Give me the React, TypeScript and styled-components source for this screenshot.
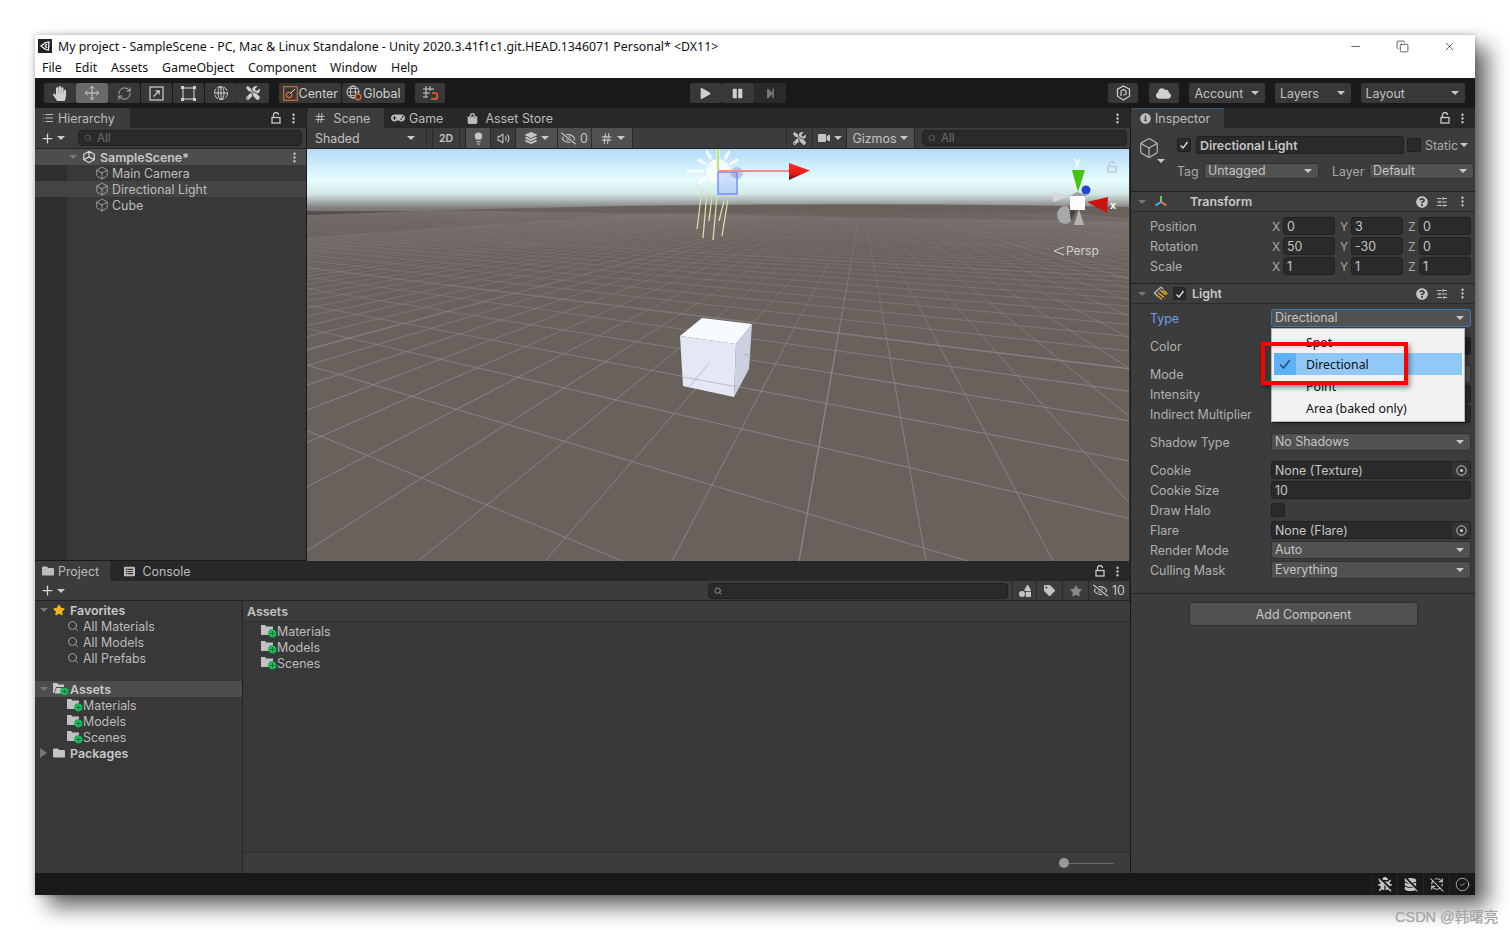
import React from 'react'
import styled, { createGlobalStyle } from 'styled-components'
import { Box, EllipsisVertical, Globe, Hash, Lightbulb, List, Minus, Move, Plus, RefreshCw, Search, SlidersHorizontal, Copy, X, Volume2, CircleCheck } from 'lucide-react'
import {
    FaBug, FaCloud, FaDatabase, FaFolder, FaFolderOpen, FaGamepad, FaHandPaper, FaInfoCircle, FaLayerGroup, FaListAlt,
    FaPause, FaPlay, FaQuestionCircle, FaRegEyeSlash, FaShapes, FaShoppingBag, FaStar, FaStepForward, FaTag, FaTools, FaVideo,
} from 'react-icons/fa'

const GlobalStyle = createGlobalStyle`
    html, body {
        margin: 0;
        height: 100%;
        overflow: hidden;
        background: #fff;
    }
    * { box-sizing: border-box; }
`

const Page = styled.div`
    position: relative;
    width: 1510px;
    height: 930px;
    padding: 35px 0 0 35px;
    font-family: Inter, "Liberation Sans", sans-serif;
    font-size: 12.4px;
    color: #c0c0c0;
`

const Window = styled.div`
    display: flex;
    flex-direction: column;
    width: 1440px;
    height: 860px;
    background: #191919;
    box-shadow: 13px 12px 20px rgba(0, 0, 0, 0.6), 0 0 6px rgba(0, 0, 0, 0.25);
`

const Watermark = styled.div`
    position: absolute;
    left: 1395px;
    top: 905px;
    font-family: "Liberation Sans", "Noto Sans CJK SC", sans-serif;
    font-size: 14.5px;
    color: #a2a2a2;
    text-shadow: 0 0 1px #ccc;
`

const TitleBar = styled.div`
    display: flex;
    align-items: center;
    height: 22px;
    padding-left: 3px;
    background: #fff;
    color: #111;
    font-family: "Noto Sans", "Liberation Sans", sans-serif;
    font-size: 12.35px;
`

const TitleText = styled.span`
    margin-left: 6px;
    flex: 1;
    white-space: nowrap;
`

const WinButtons = styled.div`
    display: flex;
    align-items: center;
    margin-right: 2px;
    svg { width: 47px; height: 13px; stroke-width: 1.2; color: #111; }
`

const MenuBar = styled.div`
    display: flex;
    align-items: center;
    height: 21px;
    background: #fff;
    color: #111;
    font-family: "Noto Sans", "Liberation Sans", sans-serif;
    font-size: 12.35px;
`

const MenuItem = styled.span<{ $w: number }>`
    width: ${props => props.$w}px;
    padding-left: 7px;
`

const MainToolbar = styled.div`
    display: flex;
    align-items: center;
    height: 30px;
    padding-left: 9px;
    background: #191919;
`

const ToolGroup = styled.div<{ $mr?: number }>`
    display: flex;
    gap: 0;
    margin-right: ${props => props.$mr ?? 10}px;
`

const ToolButton = styled.div<{ $w?: number; $active?: boolean; $dim?: boolean }>`
    display: flex;
    align-items: center;
    justify-content: center;
    gap: 1px;
    width: ${props => props.$w ?? 31.7}px;
    height: 20px;
    margin-right: 0.5px;
    border-radius: 2px;
    background: ${props => props.$active ? '#6a6a6a' : props.$dim ? '#2a2a2a' : '#383838'};
    color: ${props => props.$dim ? '#777' : '#d0d0d0'};
    font-size: 12.4px;
    white-space: nowrap;
    svg { flex: none; }
`

const BarDropdown = styled.div<{ $w: number }>`
    display: flex;
    align-items: center;
    justify-content: space-between;
    width: ${props => props.$w}px;
    height: 20px;
    margin-right: 10px;
    padding: 0 6px 0 5px;
    border-radius: 2px;
    background: #383838;
    color: #c0c0c0;
`

const Caret = styled.span<{ $color?: string; $dir?: 'down' | 'right' }>`
    flex: none;
    display: inline-block;
    width: 0;
    height: 0;
    ${props => props.$dir === 'right' ? `
        border-top: 5px solid transparent;
        border-bottom: 5px solid transparent;
        border-left: 7px solid ${props.$color ?? '#c8c8c8'};
    ` : `
        border-left: 4px solid transparent;
        border-right: 4px solid transparent;
        border-top: 4.5px solid ${props.$color ?? '#c8c8c8'};
    `}
`

const Spacer = styled.div<{ $w?: number }>`
    flex: ${props => props.$w ? 'none' : 1};
    width: ${props => props.$w ? `${props.$w}px` : 'auto'};
`

const Body = styled.div`
    display: flex;
    height: 765px;
    background: #191919;
`

const LeftColumn = styled.div`
    display: flex;
    flex-direction: column;
    width: 1095px;
`

const TopRow = styled.div`
    display: flex;
    height: 452px;
    gap: 1px;
`

const Panel = styled.div<{ $w?: number }>`
    display: flex;
    flex-direction: column;
    width: ${props => props.$w ? `${props.$w}px` : 'auto'};
    flex: ${props => props.$w ? 'none' : 1};
    background: #383838;
    min-height: 0;
`

const TabStrip = styled.div`
    display: flex;
    align-items: stretch;
    height: 20px;
    background: #282828;
    flex: none;
`

const Tab = styled.div<{ $w: number; $active?: boolean; $accent?: boolean }>`
    display: flex;
    align-items: center;
    gap: 4px;
    width: ${props => props.$w}px;
    padding-left: 7px;
    background: ${props => props.$active ? '#3c3c3c' : 'transparent'};
    border-top: ${props => props.$accent ? '1px solid #2c5d87' : 'none'};
    color: #bcbcbc;
    border-radius: 2px 2px 0 0;
    white-space: nowrap;
    svg { flex: none; }
`

const TabActions = styled.div`
    display: flex;
    align-items: center;
    gap: 6px;
    margin-left: auto;
    padding-right: 6px;
    color: #c8c8c8;
`

const PanelToolbar = styled.div<{ $h?: number }>`
    display: flex;
    align-items: center;
    height: ${props => props.$h ?? 21}px;
    flex: none;
    background: #3c3c3c;
    border-bottom: 1px solid #232323;
`

const AddMenu = styled.div`
    display: flex;
    align-items: center;
    gap: 2px;
    width: 43px;
    padding-left: 5px;
    color: #d8d8d8;
`

const SearchBox = styled.div<{ $w?: number }>`
    display: flex;
    align-items: center;
    gap: 5px;
    flex: ${props => props.$w ? 'none' : 1};
    width: ${props => props.$w ? `${props.$w}px` : 'auto'};
    height: 16px;
    padding-left: 5px;
    margin-right: 4px;
    background: #2a2a2a;
    border: 1px solid #212121;
    border-radius: 4px;
    color: #6f6f6f;
    font-size: 11.5px;
`

const TreeArea = styled.div<{ $gutter?: boolean }>`
    flex: 1;
    padding-top: 0;
    background: ${props => props.$gutter ? 'linear-gradient(to right, #2f2f2f 32px, #383838 32px)' : '#383838'};
`

const TreeRow = styled.div<{ $indent: number; $bg?: string; $bold?: boolean; $mt?: number }>`
    display: flex;
    align-items: center;
    height: 16px;
    margin-top: ${props => props.$mt ?? 0}px;
    padding-left: ${props => props.$indent}px;
    background: ${props => props.$bg ?? 'transparent'};
    font-weight: ${props => props.$bold ? 600 : 400};
    color: ${props => props.$bold ? '#c8c8c8' : '#bdbdbd'};
    white-space: nowrap;
    svg { flex: none; }
`

const RowIcon = styled.span<{ $w?: number; $color?: string }>`
    display: inline-flex;
    align-items: center;
    width: ${props => props.$w ?? 17}px;
    flex: none;
    color: ${props => props.$color ?? '#c4c4c4'};
`

const RowEnd = styled.span`
    margin-left: auto;
    display: inline-flex;
    padding-right: 5px;
    color: #c8c8c8;
`

const Cell = styled.div<{ $w: number; $on?: boolean; $bl?: boolean }>`
    display: flex;
    align-items: center;
    justify-content: center;
    gap: 4px;
    width: ${props => props.$w}px;
    height: 100%;
    flex: none;
    border-right: 1px solid #2a2a2a;
    border-left: ${props => props.$bl ? '1px solid #2a2a2a' : 'none'};
    background: ${props => props.$on ? '#505050' : 'transparent'};
    color: #c4c4c4;
    font-size: 12.4px;
`

const SceneCanvas = styled.div`
    position: relative;
    flex: 1;
    min-height: 0;
    svg { display: block; }
`

const PerspLabel = styled.div`
    position: absolute;
    left: 746px;
    top: 94px;
    display: flex;
    align-items: center;
    gap: 2px;
    color: #d0d0d0;
    font-size: 12px;
`

const ProjectPanel = styled(Panel)`
    margin-top: 1px;
    flex: 1;
`

const ProjectBody = styled.div`
    flex: 1;
    display: flex;
    min-height: 0;
`

const ProjectTree = styled.div`
    width: 208px;
    flex: none;
    padding-top: 1px;
    border-right: 1px solid #232323;
`

const ProjectFiles = styled.div`
    flex: 1;
    display: flex;
    flex-direction: column;
`

const FilesHeader = styled.div`
    display: flex;
    align-items: center;
    height: 21px;
    padding-left: 4px;
    background: #3c3c3c;
    border-bottom: 1px solid #303030;
    font-weight: 600;
    color: #c4c4c4;
`

const FilesList = styled.div`
    flex: 1;
    padding-top: 1px;
`

const FilesFooter = styled.div`
    display: flex;
    align-items: center;
    justify-content: flex-end;
    height: 21px;
    padding-right: 16px;
    background: #3c3c3c;
    border-top: 1px solid #2c2c2c;
`

const Slider = styled.div`
    position: relative;
    width: 55px;
    height: 1px;
    background: #6a6a6a;
    &::before {
        content: '';
        position: absolute;
        left: 0;
        top: -5px;
        width: 10px;
        height: 10px;
        border-radius: 50%;
        background: #999;
    }
`

const Inspector = styled(Panel)`
    width: 344px;
    margin-left: 1px;
    flex: none;
    background: #3c3c3c;
`

const ObjectHeader = styled.div`
    display: flex;
    height: 64px;
    flex: none;
    padding: 8px 5px 0 7px;
    border-bottom: 1px solid #232323;
`

const CubeSlot = styled.div`
    position: relative;
    width: 39px;
    flex: none;
    padding-top: 1px;
    color: #bdbdbd;
`

const CubeCaret = styled(Caret)`
    position: absolute;
    left: 19px;
    top: 23px;
`

const HeaderRows = styled.div`
    flex: 1;
    display: flex;
    flex-direction: column;
    gap: 8px;
`

const HeaderRow = styled.div`
    display: flex;
    align-items: center;
    height: 18px;
`

const Check = styled.span<{ $size?: number; $ml?: number }>`
    display: inline-flex;
    align-items: center;
    justify-content: center;
    width: ${props => props.$size ?? 14}px;
    height: ${props => props.$size ?? 14}px;
    margin-left: ${props => props.$ml ?? 0}px;
    flex: none;
    background: #2a2a2a;
    border: 1px solid #212121;
    border-radius: 2px;
    color: #ddd;
`

const TextField = styled.div<{ $w?: number; $strong?: boolean; $ml?: number }>`
    display: flex;
    align-items: center;
    justify-content: space-between;
    width: ${props => props.$w ? `${props.$w}px` : '100%'};
    height: 18px;
    margin-left: ${props => props.$ml ?? 0}px;
    flex: none;
    padding-left: 3px;
    background: #2a2a2a;
    border: 1px solid #212121;
    border-radius: 3px;
    color: #c4c4c4;
    font-weight: ${props => props.$strong ? 600 : 400};
    overflow: hidden;
    white-space: nowrap;
`

const Select = styled.div<{ $w?: number; $ml?: number; $focus?: boolean }>`
    display: flex;
    align-items: center;
    justify-content: space-between;
    width: ${props => props.$w ? `${props.$w}px` : '100%'};
    height: 18px;
    margin-left: ${props => props.$ml ?? 0}px;
    flex: none;
    padding: 0 6px 1px 3px;
    background: #515151;
    border: 1px solid ${props => props.$focus ? '#3a79bb' : '#303030'};
    border-radius: 3px;
    color: #c4c4c4;
    white-space: nowrap;
`

const Muted = styled.span<{ $ml?: number; $w?: number }>`
    margin-left: ${props => props.$ml ?? 0}px;
    width: ${props => props.$w ? `${props.$w}px` : 'auto'};
    color: #a8a8a8;
    flex: none;
`

const ComponentHeader = styled.div`
    display: flex;
    align-items: center;
    height: 20px;
    flex: none;
    padding-left: 7px;
    background: #3e3e3e;
    border-bottom: 1px solid #2c2c2c;
    font-weight: 600;
    color: #c8c8c8;
`

const HeaderActions = styled.div`
    display: flex;
    align-items: center;
    gap: 8px;
    margin-left: auto;
    padding-right: 6px;
    color: #c4c4c4;
`

const ComponentBody = styled.div<{ $h: number }>`
    height: ${props => props.$h}px;
    flex: none;
    padding-top: 4px;
    border-bottom: 1px solid #232323;
`

const PropRow = styled.div<{ $mt?: number }>`
    display: grid;
    grid-template-columns: 121px 200px;
    align-items: center;
    height: 20px;
    margin-top: ${props => props.$mt ?? 0}px;
    padding-left: 19px;
`

const PropLabel = styled.span<{ $focus?: boolean }>`
    color: ${props => props.$focus ? '#6d9ee6' : '#b0b0b0'};
    white-space: nowrap;
`

const ValueCell = styled.div`
    position: relative;
    display: flex;
    align-items: center;
`

const VectorCell = styled.div`
    display: flex;
    gap: 4px;
`

const Axis = styled.div`
    display: flex;
    align-items: center;
    color: #a8a8a8;
    span { width: 12px; flex: none; padding-left: 1px; font-size: 12px; }
`

const PickerSlot = styled.span`
    display: flex;
    align-items: center;
    justify-content: center;
    width: 18px;
    height: 16px;
    background: #343434;
    color: #c8c8c8;
`

const ColorStub = styled.div`
    width: 100%;
    height: 18px;
    background: #222;
    border-radius: 3px;
`

const PopupMenu = styled.div`
    position: absolute;
    left: 0;
    top: 19px;
    width: 194px;
    height: 94px;
    z-index: 5;
    padding-top: 2px;
    background: #f2f2f2;
    border: 1px solid #b8b8b8;
    box-shadow: 2px 2px 4px rgba(0, 0, 0, 0.35);
    font-family: "Noto Sans", "Liberation Sans", sans-serif;
    font-size: 12.35px;
    color: #111;
`

const PopupItem = styled.div<{ $selected?: boolean }>`
    display: flex;
    align-items: center;
    height: 22px;
    margin: 0 2px;
    background: ${props => props.$selected ? '#90c8f8' : 'transparent'};
`

const PopupCheck = styled.span<{ $selected?: boolean }>`
    display: flex;
    align-items: center;
    justify-content: center;
    width: 22px;
    height: 100%;
    margin-right: 10px;
    background: ${props => props.$selected ? '#5eb1f8' : 'transparent'};
    color: #2c4a6a;
`

const RedMark = styled.div`
    position: absolute;
    left: -11px;
    top: 13px;
    width: 147px;
    height: 43px;
    border: 4px solid #f00;
    box-shadow: 2px 3px 5px rgba(0, 0, 0, 0.4), inset 1px 1px 3px rgba(0, 0, 0, 0.15);
    z-index: 6;
`

const AddRow = styled.div`
    display: flex;
    justify-content: center;
    padding: 8px 0 0 1px;
`

const AddButton = styled.div`
    display: flex;
    align-items: center;
    justify-content: center;
    width: 229px;
    height: 24px;
    background: #515151;
    border: 1px solid #303030;
    border-radius: 3px;
    color: #c8c8c8;
`

const StatusBar = styled.div`
    display: flex;
    align-items: center;
    justify-content: flex-end;
    height: 22px;
    flex: none;
    background: #191919;
`

const StatusIcon = styled.span`
    position: relative;
    display: flex;
    align-items: center;
    justify-content: center;
    width: 26px;
    height: 100%;
    border-left: 1px solid #262626;
    color: #c4c4c4;
`

const Slash = styled.span`
    position: absolute;
    left: 5px;
    top: 10px;
    width: 18px;
    height: 2px;
    background: #191919;
    transform: rotate(45deg);
    &::after {
        content: '';
        position: absolute;
        left: 0;
        top: 2px;
        width: 18px;
        height: 1px;
        background: #c4c4c4;
    }
`

/* icons */

const LockIcon = ({ color = '#c8c8c8' }: { color?: string }) => (
    <svg width="10" height="12" viewBox="0 0 10 12" fill="none" stroke={color} strokeWidth="1.3">
        <rect x="1" y="5.5" width="8" height="5.5" />
        <path d="M2.5 5.5V3a2.5 2.5 0 0 1 5 0" />
    </svg>
)

const Dots = () => <EllipsisVertical size={13} strokeWidth={2.4} />

const UnityMark = ({ size = 14, color = '#fff' }: { size?: number; color?: string }) => (
    <svg width={size} height={size} viewBox="0 0 16 16" fill="none" stroke={color} strokeWidth="1.3">
        <path d="M8 1.5 14 5v6l-6 3.5L2 11V5z M8 8V1.5 M8 8l-6 3 M8 8l6 3" />
    </svg>
)

const FolderPlus = ({ open }: { open?: boolean }) => (
    <svg width="16" height="14" viewBox="0 0 16 14">
        {open ? (
            <path d="M0 1h4l1.5 1.5H11V5H3L1 11H0z M3.5 6H13l-2 5.5H1.5z" fill="#c8c8c8" />
        ) : (
            <path d="M0 1h4l1.5 1.5H12v8.5H0z" fill="#c0c0c0" />
        )}
        <circle cx="11.5" cy="9.5" r="4" fill="#0ecb5a" stroke="#383838" strokeWidth="0.4" />
        <path d="M11.5 7.3v4.4M9.3 9.5h4.4" stroke="#063" strokeWidth="1.1" />
    </svg>
)

const ScaleIcon = () => (
    <svg width="15" height="15" viewBox="0 0 15 15" fill="none" stroke="#d0d0d0" strokeWidth="1.2">
        <rect x="1" y="1" width="13" height="13" />
        <path d="M4.5 10.5 10 5M6.5 4.8h3.7v3.7" />
    </svg>
)

const RectIcon = () => (
    <svg width="15" height="15" viewBox="0 0 15 15" fill="none" stroke="#d0d0d0" strokeWidth="1.1">
        <rect x="2" y="2" width="11" height="11" />
        <path d="M0 0h3v3H0zM12 0h3v3h-3zM0 12h3v3H0zM12 12h3v3h-3z" fill="#d0d0d0" stroke="none" />
    </svg>
)

const TransformIcon = () => (
    <svg width="16" height="16" viewBox="0 0 16 16" fill="none" stroke="#cfcfcf" strokeWidth="1">
        <circle cx="8" cy="8" r="6.5" strokeDasharray="5 1.5" />
        <ellipse cx="8" cy="8" rx="3" ry="6.5" />
        <path d="M1 8h14M8 1v14" />
    </svg>
)

const CenterIcon = () => (
    <svg width="15" height="15" viewBox="0 0 15 15" fill="none">
        <rect x="0.7" y="0.7" width="13.6" height="13.6" stroke="#e0703a" strokeWidth="1.1" />
        <circle cx="6" cy="9" r="2.7" stroke="#e0703a" strokeWidth="1.2" />
        <path d="M8 7l4-4" stroke="#ddd" strokeWidth="1" />
    </svg>
)

const GlobalIcon = () => (
    <svg width="16" height="16" viewBox="0 0 16 16" fill="none">
        <circle cx="7" cy="7" r="6" stroke="#d0d0d0" />
        <ellipse cx="7" cy="7" rx="2.6" ry="6" stroke="#d0d0d0" />
        <path d="M1 7h12M2 3.5h10M2 10.5h10" stroke="#d0d0d0" strokeWidth="0.8" />
        <circle cx="12" cy="12" r="2.8" stroke="#e66a2a" strokeWidth="1.3" fill="#383838" />
    </svg>
)

const SnapIcon = () => (
    <svg width="16" height="16" viewBox="0 0 16 16" fill="none">
        <path d="M4 1v11M8 1v5M1 4h11M1 8h7M1 12h5" stroke="#d0d0d0" />
        <path d="M10 8h2.5a2.7 2.7 0 0 1 0 6H9" stroke="#f0602a" strokeWidth="1.7" />
    </svg>
)

const CollabIcon = () => (
    <svg width="15" height="16" viewBox="0 0 15 16" fill="none" stroke="#cfcfcf" strokeWidth="1.2">
        <path d="M7.5 1 13.5 4.2v7L7.5 15l-6-3.8v-7z" />
        <path d="M5 11V6l2.5-1.5L10 6v3L7.5 10.300" />
    </svg>
)

const AxisGizmoIcon = () => (
    <svg width="16" height="14" viewBox="0 0 16 14" fill="none" strokeWidth="2">
        <path d="M8 1v6" stroke="#5fd05a" />
        <path d="M8 7 2.500 10.500" stroke="#4ab6ea" />
        <path d="M8 7l5.500 3.500" stroke="#e9784b" />
    </svg>
)

const LightIcon = () => (
    <svg width="16" height="15" viewBox="0 0 16 15" fill="none" stroke="#e6a92a" strokeWidth="1.4">
        <path d="M8 1 1.500 7l3 3M8 1l2 2" stroke="#b9b9b9" />
        <path d="M7 4l6 5M5 6.500l6 5M3.500 9l5.500 4.500M10 4l4.500 4" />
    </svg>
)

const PickerIcon = () => (
    <svg width="11" height="11" viewBox="0 0 11 11" fill="none" stroke="#c8c8c8">
        <circle cx="5.500" cy="5.500" r="4.700" />
        <circle cx="5.500" cy="5.500" r="1.500" fill="#c8c8c8" stroke="none" />
    </svg>
)

const EyeCount = ({ n }: { n: number }) => (
    <>
        <FaRegEyeSlash size={15} />
        <span>{n}</span>
    </>
)

/* scene view */

const VP_A = { x: -560, y: 50 }
const VP_B = { x: 555, y: 50 }
const SCENE_W = 822
const SCENE_H = 412

const rowLines = Array.from({ length: 62 }, (_, i) => {
    const n = i - 2
    const y = 50 + 1 / (0.00313 + 0.00069 * n)
    const slope = (y - VP_A.y) / (SCENE_W - VP_A.x)
    return { y1: VP_A.y + slope * (0 - VP_A.x), y2: y, major: ((n % 10) + 10) % 10 === 4 }
})

const colLines = Array.from({ length: 81 }, (_, i) => {
    const k = i - 40
    const xb = 492 + 127 * k
    return { xb, major: k % 10 === 0 }
})

const sunRays = [0, 30, 60, 90, 120, 150, 180, 210, 330]

const beams = [
    [395, 40, 390, 80], [400, 42, 396, 89], [405, 47, 402, 72], [410, 47, 406, 91], [417, 52, 412, 72], [421, 50, 415, 87],
]

const SceneDrawing = () => (
    <svg width={SCENE_W} height={SCENE_H} viewBox={`0 0 ${SCENE_W} ${SCENE_H}`}>
        <defs>
            <linearGradient id="sky" x1="0" y1="0" x2="0" y2="1">
                <stop offset="0" stopColor="#b4dbf6" />
                <stop offset="0.5" stopColor="#e6fcff" />
                <stop offset="0.72" stopColor="#d5e8e8" />
                <stop offset="1" stopColor="#6f6a67" />
            </linearGradient>
            <linearGradient id="gridFade" gradientUnits="userSpaceOnUse" x1="0" y1="55" x2="0" y2="230">
                <stop offset="0" stopColor="#8a8683" stopOpacity="0.08" />
                <stop offset="0.5" stopColor="#8a8683" stopOpacity="0.5" />
                <stop offset="1" stopColor="#8f8b88" stopOpacity="0.9" />
            </linearGradient>
            <linearGradient id="arrow" x1="0" y1="0" x2="0" y2="1">
                <stop offset="0" stopColor="#ff2a20" />
                <stop offset="0.65" stopColor="#e81a16" />
                <stop offset="1" stopColor="#3a1414" />
            </linearGradient>
        </defs>
        <rect width={SCENE_W} height="62" fill="url(#sky)" />
        <path d={`M0 66Q400 50 ${SCENE_W} 58V${SCENE_H}H0Z`} fill="#69615c" />
        {rowLines.map((l, i) => (
            <line key={i} x1="0" y1={l.y1} x2={SCENE_W} y2={l.y2} stroke="url(#gridFade)" strokeWidth={l.major ? 1.5 : 0.9} />
        ))}
        {colLines.map((l, i) => (
            <line key={i} x1={VP_B.x + (l.xb - VP_B.x) * (14 / 361)} y1={64} x2={l.xb} y2={SCENE_H} stroke="url(#gridFade)" strokeWidth={l.major ? 1.4 : 0.9} />
        ))}

        <polygon points="373,187 395,169 445,175 429,195" fill="#f7fbff" />
        <polygon points="373,187 429,195 427,248 376,237" fill="#e4e8f4" />
        <polygon points="429,195 445,175 442,220 427,248" fill="#ccd1e2" />
        <path d="M402 214 383 237M376 228 431 238" stroke="#b4b8c4" strokeWidth="0.9" fill="none" />
        <path d="M436 205 444 207" stroke="#a8acb8" strokeWidth="0.9" />

        {beams.map((b, i) => (
            <line key={i} x1={b[0]} y1={b[1]} x2={b[2]} y2={b[3]} stroke="#dcdca6" strokeWidth="1.3" />
        ))}
        <circle cx="411" cy="22" r="12" fill="#fff" fillOpacity="0.75" />
        {sunRays.map(a => {
            const r = (a * Math.PI) / 180
            return (
                <line key={a} x1={411 + Math.cos(r) * 15} y1={22 - Math.sin(r) * 15} x2={411 + Math.cos(r) * (a % 90 ? 22 : 30)} y2={22 - Math.sin(r) * (a % 90 ? 22 : 30)}
                    stroke="#fff" strokeOpacity="0.8" strokeWidth="3" strokeLinecap="round" />
            )
        })}
        <circle cx="430" cy="24" r="6" fill="#8fa4d8" fillOpacity="0.55" />
        <rect x="411" y="23" width="19" height="22" fill="#7f9cff" fillOpacity="0.3" stroke="#6a8cff" strokeWidth="1.4" />
        <line x1="411" y1="0" x2="411" y2="22" stroke="#b4f06a" strokeWidth="2" />
        <line x1="411" y1="22" x2="483" y2="22" stroke="#f58a8a" strokeWidth="2" />
        <polygon points="482,14 503,21.500 482,31" fill="url(#arrow)" />

        <text x="767" y="16" fill="#fff" fontSize="11" fontWeight="600" fontFamily="Inter, sans-serif">y</text>
        <text x="781" y="39" fill="#e8f4ff" fontSize="10" fontWeight="600" fontFamily="Inter, sans-serif">z</text>
        <text x="803" y="60" fill="#fff" fontSize="11" fontWeight="600" fontFamily="Inter, sans-serif">x</text>
        <circle cx="779" cy="41" r="4.500" fill="#1f46d8" />
        <polygon points="765,21 778,21 771,43" fill="#46c40e" />
        <polygon points="763,47 770,43 779,46 778,50 763,50" fill="#a0a0a0" />
        <polygon points="746,43 761,48 746,53" fill="#d8d8d8" />
        <ellipse cx="758" cy="66" rx="8" ry="9" fill="#a8a8a8" />
        <polygon points="762,58 768,56 768,64 764,72" fill="#444" />
        <polygon points="772,60 767,76 777,76" fill="#b4b4b4" />
        <rect x="763" y="47" width="15" height="14" fill="#fbfbfb" />
        <polygon points="780,53 801,48 800,64" fill="#c8140e" />
        <g transform="translate(800 12)"><LockIcon color="#bcc8d0" /></g>
    </svg>
)

const PerspArrow = () => (
    <svg width="11" height="10" viewBox="0 0 11 10" fill="none" stroke="#d0d0d0">
        <path d="M11 1 1 5l10 4" />
    </svg>
)

/* data */

const transformRows = [
    { label: 'Position', x: '0', y: '3', z: '0' },
    { label: 'Rotation', x: '50', y: '-30', z: '0' },
    { label: 'Scale', x: '1', y: '1', z: '1' },
]

const favorites = ['All Materials', 'All Models', 'All Prefabs']
const folders = ['Materials', 'Models', 'Scenes']
const popupItems = ['Spot', 'Directional', 'Point', 'Area (baked only)']
const menus: [string, number][] = [['File', 33], ['Edit', 36], ['Assets', 51], ['GameObject', 86], ['Component', 82], ['Window', 61], ['Help', 50]]

const ComponentActions = () => (
    <HeaderActions>
        <FaQuestionCircle size={12} />
        <SlidersHorizontal size={12} />
        <Dots />
    </HeaderActions>
)

const App = () => (
    <Page>
        <GlobalStyle />
        <Window>
            <TitleBar>
                <svg width="14" height="14" viewBox="0 0 14 14">
                    <rect width="14" height="14" fill="#222" />
                    <path d="M3 7 7.500 3.500 11 3l-.5 8-3-.5zM7 7l2-2M7 7l2 2" fill="none" stroke="#fff" strokeWidth="1.2" />
                </svg>
                <TitleText>My project - SampleScene - PC, Mac &amp; Linux Standalone - Unity 2020.3.41f1c1.git.HEAD.1346071 Personal* &lt;DX11&gt;</TitleText>
                <WinButtons>
                    <Minus />
                    <Copy />
                    <X />
                </WinButtons>
            </TitleBar>
            <MenuBar>
                {menus.map(([name, w]) => <MenuItem key={name} $w={w}>{name}</MenuItem>)}
            </MenuBar>
            <MainToolbar>
                <ToolGroup>
                    <ToolButton><FaHandPaper size={15} /></ToolButton>
                    <ToolButton $active><Move size={16} strokeWidth={1.5} /></ToolButton>
                    <ToolButton><RefreshCw size={15} strokeWidth={1.3} /></ToolButton>
                    <ToolButton><ScaleIcon /></ToolButton>
                    <ToolButton><RectIcon /></ToolButton>
                    <ToolButton><TransformIcon /></ToolButton>
                    <ToolButton><FaTools size={14} /></ToolButton>
                </ToolGroup>
                <ToolGroup>
                    <ToolButton $w={62}><CenterIcon />Center</ToolButton>
                    <ToolButton $w={63}><GlobalIcon />Global</ToolButton>
                </ToolGroup>
                <ToolGroup $mr={244}>
                    <ToolButton $w={30}><SnapIcon /></ToolButton>
                </ToolGroup>
                <ToolGroup $mr={322}>
                    <ToolButton><FaPlay size={11} /></ToolButton>
                    <ToolButton><FaPause size={11} /></ToolButton>
                    <ToolButton $dim><FaStepForward size={11} /></ToolButton>
                </ToolGroup>
                <ToolGroup>
                    <ToolButton $w={30}><CollabIcon /></ToolButton>
                </ToolGroup>
                <ToolGroup>
                    <ToolButton $w={30}><FaCloud size={15} /></ToolButton>
                </ToolGroup>
                <BarDropdown $w={78}>Account<Caret /></BarDropdown>
                <BarDropdown $w={78}>Layers<Caret /></BarDropdown>
                <BarDropdown $w={108}>Layout<Caret /></BarDropdown>
            </MainToolbar>
            <Body>
                <LeftColumn>
                    <TopRow>
                        <Panel $w={271}>
                            <TabStrip>
                                <Tab $w={95} $active><List size={12} />Hierarchy</Tab>
                                <TabActions><LockIcon /><Dots /></TabActions>
                            </TabStrip>
                            <PanelToolbar>
                                <AddMenu><Plus size={15} strokeWidth={2} /><Caret /></AddMenu>
                                <SearchBox><Search size={8} />All</SearchBox>
                            </PanelToolbar>
                            <TreeArea $gutter>
                                <TreeRow $indent={34} $bg="#4d4d4d" $bold>
                                    <RowIcon $w={13}><Caret $color="#777" /></RowIcon>
                                    <RowIcon $w={18}><UnityMark size={14} color="#ddd" /></RowIcon>
                                    SampleScene*
                                    <RowEnd><Dots /></RowEnd>
                                </TreeRow>
                                <TreeRow $indent={60}><RowIcon><Box size={14} strokeWidth={1.2} /></RowIcon>Main Camera</TreeRow>
                                <TreeRow $indent={60} $bg="#444"><RowIcon><Box size={14} strokeWidth={1.2} /></RowIcon>Directional Light</TreeRow>
                                <TreeRow $indent={60}><RowIcon><Box size={14} strokeWidth={1.2} /></RowIcon>Cube</TreeRow>
                            </TreeArea>
                        </Panel>
                        <Panel>
                            <TabStrip>
                                <Tab $w={77} $active><Hash size={12} />&nbsp;Scene</Tab>
                                <Tab $w={76}><FaGamepad size={14} />Game</Tab>
                                <Tab $w={100}><FaShoppingBag size={11} />&nbsp;Asset Store</Tab>
                                <TabActions><Dots /></TabActions>
                            </TabStrip>
                            <PanelToolbar>
                                <Cell $w={120}>
                                    <Spacer $w={4} />Shaded<Spacer /><Caret /><Spacer $w={7} />
                                </Cell>
                                <Cell $w={6} />
                                <Cell $w={27}><b style={{ fontSize: 10.5, fontWeight: 600 }}>2D</b></Cell>
                                <Cell $w={6} />
                                <Cell $w={25} $on><Lightbulb size={13} fill="#c8c8c8" /></Cell>
                                <Cell $w={25}><Volume2 size={13} /></Cell>
                                <Cell $w={42} $on><FaLayerGroup size={12} /><Caret /></Cell>
                                <Cell $w={34} $on><EyeCount n={0} /></Cell>
                                <Cell $w={41} $on><Hash size={13} /><Caret /></Cell>
                                <Spacer />
                                <Cell $w={27} $bl><FaTools size={13} /></Cell>
                                <Cell $w={34}><FaVideo size={12} /><Caret /></Cell>
                                <Cell $w={68} $on>Gizmos<Caret /></Cell>
                                <Spacer $w={7} />
                                <SearchBox $w={205} style={{ marginRight: 3 }}><Search size={8} />All</SearchBox>
                            </PanelToolbar>
                            <SceneCanvas>
                                <SceneDrawing />
                                <PerspLabel><PerspArrow />Persp</PerspLabel>
                            </SceneCanvas>
                        </Panel>
                    </TopRow>
                    <ProjectPanel>
                        <TabStrip>
                            <Tab $w={75} $active><FaFolder size={12} />Project</Tab>
                            <Tab $w={100} style={{ paddingLeft: 14 }}><FaListAlt size={11} />&nbsp;Console</Tab>
                            <TabActions><LockIcon /><Dots /></TabActions>
                        </TabStrip>
                        <PanelToolbar $h={20}>
                            <AddMenu><Plus size={15} strokeWidth={2} /><Caret /></AddMenu>
                            <Spacer />
                            <SearchBox $w={300}><Search size={8} color="#bbb" /></SearchBox>
                            <Cell $w={25} $bl><FaShapes size={12} /></Cell>
                            <Cell $w={26}><FaTag size={11} /></Cell>
                            <Cell $w={26}><FaStar size={12} color="#888" /></Cell>
                            <Cell $w={41}><EyeCount n={10} /></Cell>
                        </PanelToolbar>
                        <ProjectBody>
                            <ProjectTree>
                                <TreeRow $indent={5} $bold>
                                    <RowIcon $w={13}><Caret $color="#777" /></RowIcon>
                                    <RowIcon $w={17} $color="#f3b51a"><FaStar size={12} /></RowIcon>Favorites
                                </TreeRow>
                                {favorites.map(f => (
                                    <TreeRow key={f} $indent={32}><RowIcon $w={16}><Search size={12} strokeWidth={1.4} /></RowIcon>{f}</TreeRow>
                                ))}
                                <TreeRow $indent={5} $bold $bg="#4d4d4d" $mt={15}>
                                    <RowIcon $w={13}><Caret $color="#777" /></RowIcon>
                                    <RowIcon $w={17}><FolderPlus open /></RowIcon>Assets
                                </TreeRow>
                                {folders.map(f => (
                                    <TreeRow key={f} $indent={32}><RowIcon $w={16}><FolderPlus /></RowIcon>{f}</TreeRow>
                                ))}
                                <TreeRow $indent={5} $bold>
                                    <RowIcon $w={13}><Caret $dir="right" $color="#777" /></RowIcon>
                                    <RowIcon $w={17}><FaFolder size={12} /></RowIcon>Packages
                                </TreeRow>
                            </ProjectTree>
                            <ProjectFiles>
                                <FilesHeader>Assets</FilesHeader>
                                <FilesList>
                                    {folders.map(f => (
                                        <TreeRow key={f} $indent={18}><RowIcon $w={16}><FolderPlus /></RowIcon>{f}</TreeRow>
                                    ))}
                                </FilesList>
                                <FilesFooter><Slider /></FilesFooter>
                            </ProjectFiles>
                        </ProjectBody>
                    </ProjectPanel>
                </LeftColumn>
                <Inspector>
                    <TabStrip>
                        <Tab $w={93} $active $accent style={{ paddingLeft: 9 }}><FaInfoCircle size={11} />Inspector</Tab>
                        <TabActions><LockIcon /><Dots /></TabActions>
                    </TabStrip>
                    <ObjectHeader>
                        <CubeSlot>
                            <Box size={22} strokeWidth={1.2} />
                            <CubeCaret />
                        </CubeSlot>
                        <HeaderRows>
                            <HeaderRow>
                                <Check><svg width="10" height="10" viewBox="0 0 10 10" fill="none" stroke="#ddd" strokeWidth="1.4"><path d="M1.500 5.500 4 8l4.500-6" /></svg></Check>
                                <TextField $w={208} $ml={5} $strong>Directional Light</TextField>
                                <Check $ml={3} />
                                <Muted $ml={4}>Static</Muted>
                                <Spacer $w={2} />
                                <Caret />
                            </HeaderRow>
                            <HeaderRow>
                                <Muted $w={27}>Tag</Muted>
                                <Select $w={115} style={{ height: 16 }}>Untagged<Caret /></Select>
                                <Muted $ml={13} $w={37}>Layer</Muted>
                                <Select $w={105} style={{ height: 16 }}>Default<Caret /></Select>
                            </HeaderRow>
                        </HeaderRows>
                    </ObjectHeader>
                    <ComponentHeader>
                        <RowIcon $w={15}><Caret $color="#777" /></RowIcon>
                        <AxisGizmoIcon />
                        <Spacer $w={21} />Transform
                        <ComponentActions />
                    </ComponentHeader>
                    <ComponentBody $h={72}>
                        {transformRows.map(r => (
                            <PropRow key={r.label}>
                                <PropLabel>{r.label}</PropLabel>
                                <VectorCell>
                                    <Axis><span>X</span><TextField $w={52}>{r.x}</TextField></Axis>
                                    <Axis><span>Y</span><TextField $w={52}>{r.y}</TextField></Axis>
                                    <Axis><span>Z</span><TextField $w={52}>{r.z}</TextField></Axis>
                                </VectorCell>
                            </PropRow>
                        ))}
                    </ComponentBody>
                    <ComponentHeader>
                        <RowIcon $w={15}><Caret $color="#777" /></RowIcon>
                        <LightIcon />
                        <Check $ml={4} $size={13}><svg width="10" height="10" viewBox="0 0 10 10" fill="none" stroke="#ddd" strokeWidth="1.4"><path d="M1.500 5.500 4 8l4.500-6" /></svg></Check>
                        <Spacer $w={6} />Light
                        <ComponentActions />
                    </ComponentHeader>
                    <ComponentBody $h={290}>
                        <PropRow>
                            <PropLabel $focus>Type</PropLabel>
                            <ValueCell>
                                <Select $focus>Directional<Caret /></Select>
                                <PopupMenu>
                                    {popupItems.map(item => (
                                        <PopupItem key={item} $selected={item === 'Directional'}>
                                            <PopupCheck $selected={item === 'Directional'}>
                                                {item === 'Directional' && (
                                                    <svg width="12" height="10" viewBox="0 0 12 10" fill="none" stroke="#2c4a6a" strokeWidth="1.6"><path d="M1 5.500 4.500 9 11 1" /></svg>
                                                )}
                                            </PopupCheck>
                                            {item}
                                        </PopupItem>
                                    ))}
                                    <RedMark />
                                </PopupMenu>
                            </ValueCell>
                        </PropRow>
                        <PropRow $mt={8}><PropLabel>Color</PropLabel><ValueCell><ColorStub /></ValueCell></PropRow>
                        <PropRow $mt={8}><PropLabel>Mode</PropLabel><ValueCell><Select /></ValueCell></PropRow>
                        <PropRow><PropLabel>Intensity</PropLabel><ValueCell><TextField /></ValueCell></PropRow>
                        <PropRow><PropLabel>Indirect Multiplier</PropLabel><ValueCell><TextField /></ValueCell></PropRow>
                        <PropRow $mt={8}><PropLabel>Shadow Type</PropLabel><ValueCell><Select>No Shadows<Caret /></Select></ValueCell></PropRow>
                        <PropRow $mt={8}><PropLabel>Cookie</PropLabel><ValueCell><TextField>None (Texture)<PickerSlot><PickerIcon /></PickerSlot></TextField></ValueCell></PropRow>
                        <PropRow><PropLabel>Cookie Size</PropLabel><ValueCell><TextField>10</TextField></ValueCell></PropRow>
                        <PropRow><PropLabel>Draw Halo</PropLabel><ValueCell><Check /></ValueCell></PropRow>
                        <PropRow><PropLabel>Flare</PropLabel><ValueCell><TextField>None (Flare)<PickerSlot><PickerIcon /></PickerSlot></TextField></ValueCell></PropRow>
                        <PropRow><PropLabel>Render Mode</PropLabel><ValueCell><Select>Auto<Caret /></Select></ValueCell></PropRow>
                        <PropRow><PropLabel>Culling Mask</PropLabel><ValueCell><Select>Everything<Caret /></Select></ValueCell></PropRow>
                    </ComponentBody>
                    <AddRow><AddButton>Add Component</AddButton></AddRow>
                </Inspector>
            </Body>
            <StatusBar>
                <StatusIcon><FaBug size={14} /><Slash /></StatusIcon>
                <StatusIcon><FaDatabase size={13} /><Slash /></StatusIcon>
                <StatusIcon><RefreshCw size={14} /><Slash /></StatusIcon>
                <StatusIcon><CircleCheck size={15} strokeWidth={1.3} /></StatusIcon>
            </StatusBar>
        </Window>
        <Watermark>CSDN @韩曙亮</Watermark>
    </Page>
)

export default App
